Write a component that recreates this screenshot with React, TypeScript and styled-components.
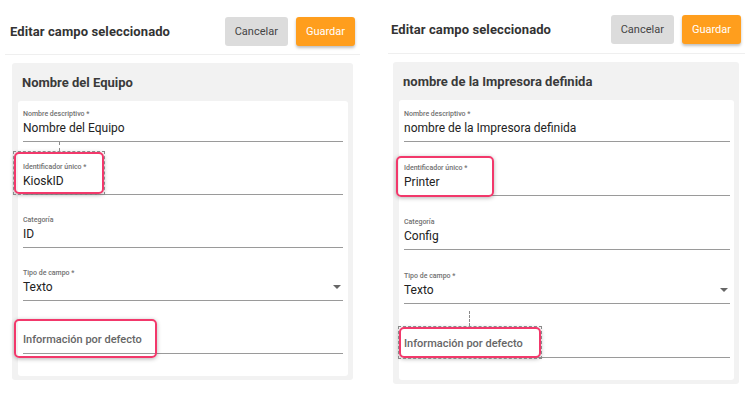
import * as React from "react";
import styled, { createGlobalStyle } from "styled-components";

const GlobalStyle = createGlobalStyle`
  body {
    margin: 0;
    background: #ffffff;
    font-family: Roboto, "Liberation Sans", Arial, sans-serif;
  }
`;

const Page = styled.div`
  width: 751px;
  height: 399px;
  display: flex;
  flex-flow: row nowrap;
  overflow: hidden;
  background: white;
`;

const Panel = styled.div<{ $left: number; $top: number; $width: number }>`
  margin-left: ${(p) => p.$left}px;
  padding-top: ${(p) => p.$top}px;
  width: ${(p) => p.$width}px;
  display: flex;
  flex-flow: column nowrap;
  box-sizing: border-box;
`;

const Header = styled.div<{ $padLeft: number; $padRight: number; $padBottom: number }>`
  display: flex;
  align-items: center;
  justify-content: space-between;
  padding: 0 ${(p) => p.$padRight}px ${(p) => p.$padBottom}px ${(p) => p.$padLeft}px;
  border-bottom: 1px solid #efefef;
`;

const Title = styled.h2`
  margin: 0;
  font-size: 13px;
  font-weight: 700;
  color: #333333;
  letter-spacing: 0.1px;
`;

const Actions = styled.div`
  display: flex;
  gap: 8px;
`;

const Button = styled.button<{ $primary?: boolean }>`
  height: 29px;
  border: none;
  border-radius: 3px;
  padding: 0 10px;
  font-family: Roboto, "Liberation Sans", Arial, sans-serif;
  font-size: 11px;
  color: ${(p) => (p.$primary ? "#ffffff" : "#444444")};
  background: ${(p) => (p.$primary ? "#ff9e1d" : "#dcdcdc")};
  box-shadow: ${(p) => (p.$primary ? "0 2px 3px rgba(0,0,0,0.25)" : "none")};
  min-width: ${(p) => (p.$primary ? 59 : 63)}px;
`;

const Card = styled.div<{ $inset: number; $insetRight: number }>`
  margin: 8px ${(p) => p.$insetRight}px 0 ${(p) => p.$inset}px;
  background: #f2f2f2;
  border-radius: 3px;
  padding: 0 5px 4px 6px;
`;

const CardTitle = styled.div<{ $padLeft: number }>`
  font-size: 13px;
  font-weight: 700;
  color: #3a3a3a;
  height: 38px;
  display: flex;
  align-items: center;
  padding-left: ${(p) => p.$padLeft}px;
`;

const Form = styled.div<{ $gap: number; $padRight: number; $padTop: number }>`
  background: #ffffff;
  border-radius: 3px;
  padding: ${(p) => p.$padTop}px ${(p) => p.$padRight}px 22px 5px;
  display: flex;
  flex-flow: column nowrap;
  gap: ${(p) => p.$gap}px;
`;

const Field = styled.div`
  position: relative;
  display: flex;
  flex-flow: column nowrap;
  border-bottom: 1px solid #9a9a9a;
  padding-bottom: 5px;
`;

const Label = styled.div`
  height: 10px;
  line-height: 10px;
  font-size: 7px;
  font-weight: 500;
  color: #707070;
`;

const Value = styled.div<{ $placeholder?: boolean }>`
  height: 16px;
  line-height: 16px;
  margin-top: 1px;
  font-size: ${(p) => (p.$placeholder ? 11 : 12)}px;
  font-weight: ${(p) => (p.$placeholder ? 500 : 400)};
  color: ${(p) => (p.$placeholder ? "#666666" : "#222222")};
  display: flex;
  justify-content: space-between;
  align-items: center;
`;

const Caret = styled.span`
  width: 0;
  height: 0;
  border-left: 4px solid transparent;
  border-right: 4px solid transparent;
  border-top: 4px solid #666666;
  margin-right: 2px;
`;

const Highlight = styled.div<{
  $x: number;
  $y: number;
  $w: number;
  $h: number;
  $guide?: number;
  $guideX?: number;
}>`
  position: absolute;
  left: ${(p) => p.$x}px;
  top: ${(p) => p.$y}px;
  width: ${(p) => p.$w}px;
  height: ${(p) => p.$h}px;
  box-sizing: border-box;
  border: 2.5px solid #f2386b;
  border-radius: 5px;
  box-shadow: 0 1px 4px rgba(0, 0, 0, 0.3);
  pointer-events: none;

  &::before {
    content: "";
    display: ${(p) => (p.$guide ? "block" : "none")};
    position: absolute;
    left: -3px;
    top: -3px;
    right: -3px;
    bottom: -3px;
    border: 1px dashed #8a8a8a;
  }

  &::after {
    content: "";
    display: ${(p) => (p.$guide ? "block" : "none")};
    position: absolute;
    left: ${(p) => p.$guideX ?? 0}px;
    top: ${(p) => -(p.$guide ?? 0) - 3}px;
    height: ${(p) => p.$guide ?? 0}px;
    border-left: 1px dashed #8a8a8a;
  }
`;

type Mark = { x: number; y: number; w: number; h: number; guide?: number; guideX?: number };

type FieldDef = {
  label?: string;
  value: string;
  placeholder?: boolean;
  select?: boolean;
  mark?: Mark;
};

type PanelDef = {
  left: number;
  top: number;
  width: number;
  headPad: [number, number, number];
  cardInset: [number, number];
  titlePad: number;
  gap: number;
  formPad: [number, number];
  name: string;
  fields: FieldDef[];
};

const panels: PanelDef[] = [
  {
    left: 5,
    top: 17,
    width: 355,
    headPad: [5, 5, 8],
    cardInset: [7, 7],
    titlePad: 4,
    gap: 20,
    formPad: [8, 5],
    name: "Nombre del Equipo",
    fields: [
      { label: "Nombre descriptivo *", value: "Nombre del Equipo" },
      {
        label: "Identificador único *",
        value: "KioskID",
        mark: { x: -9, y: -10, w: 90, h: 42, guide: 9, guideX: 43 },
      },
      { label: "Categoría", value: "ID" },
      { label: "Tipo de campo *", value: "Texto", select: true },
      {
        value: "Información por defecto",
        placeholder: true,
        mark: { x: -9, y: -2, w: 143, h: 39 },
      },
    ],
  },
  {
    left: 28,
    top: 15,
    width: 357,
    headPad: [3, 4, 9],
    cardInset: [5, 6],
    titlePad: 4,
    gap: 21,
    formPad: [9, 4],
    name: "nombre de la Impresora definida",
    fields: [
      { label: "Nombre descriptivo *", value: "nombre de la Impresora definida" },
      {
        label: "Identificador único *",
        value: "Printer",
        mark: { x: -8, y: -7, w: 98, h: 41 },
      },
      { label: "Categoría", value: "Config" },
      { label: "Tipo de campo *", value: "Texto", select: true },
      {
        value: "Información por defecto",
        placeholder: true,
        mark: { x: -5, y: 2, w: 142, h: 31, guide: 15, guideX: 68 },
      },
    ],
  },
];

const EditPanel = ({ def }: { def: PanelDef }) => (
  <Panel $left={def.left} $top={def.top} $width={def.width}>
    <Header $padLeft={def.headPad[0]} $padRight={def.headPad[1]} $padBottom={def.headPad[2]}>
      <Title>Editar campo seleccionado</Title>
      <Actions>
        <Button>Cancelar</Button>
        <Button $primary>Guardar</Button>
      </Actions>
    </Header>
    <Card $inset={def.cardInset[0]} $insetRight={def.cardInset[1]}>
      <CardTitle $padLeft={def.titlePad}>{def.name}</CardTitle>
      <Form $gap={def.gap} $padTop={def.formPad[0]} $padRight={def.formPad[1]}>
        {def.fields.map((f, i) => (
          <Field key={i}>
            <Label>{f.label ?? ""}</Label>
            <Value $placeholder={f.placeholder}>
              <span>{f.value}</span>
              {f.select && <Caret />}
            </Value>
            {f.mark && (
              <Highlight
                $x={f.mark.x}
                $y={f.mark.y}
                $w={f.mark.w}
                $h={f.mark.h}
                $guide={f.mark.guide}
                $guideX={f.mark.guideX}
              />
            )}
          </Field>
        ))}
      </Form>
    </Card>
  </Panel>
);

const App = () => {
  return (
    <Page>
      <GlobalStyle />
      {panels.map((p, i) => (
        <EditPanel key={i} def={p} />
      ))}
    </Page>
  );
};

export default App;
